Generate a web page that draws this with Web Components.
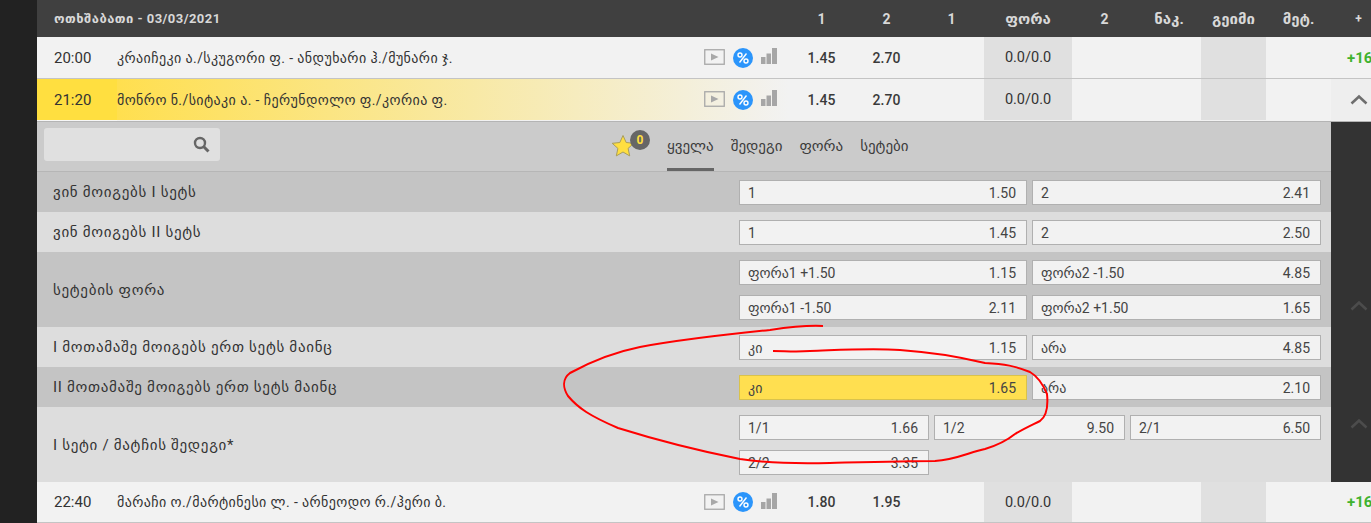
<!DOCTYPE html>
<html lang="ka">
<head>
<meta charset="utf-8">
<title>Odds</title>
<style>
html, body { margin: 0; padding: 0; height: 523px; overflow: hidden; }
body {
    position: relative;
    background: #222;
    color: #333;
    font-family: Roboto, "DejaVu Sans", sans-serif;
    font-size: 14px;
    padding-left: 37px;
    box-sizing: border-box;
}
</style>
</head>
<body>
<day-header date="ოთხშაბათი - 03/03/2021"></day-header>

<match-row time="20:00" name="კრაიჩეკი ა./სკუგორი ფ. - ანდუხარი ჰ./მუნარი ჯ." one="1.45" two="2.70" more="+16"></match-row>
<match-row time="21:20" name="მონრო ნ./სიტაკი ა. - ჩერუნდოლო ფ./კორია ფ." one="1.45" two="2.70" active></match-row>

<market-panel>
    <market-row label="ვინ მოიგებს I სეტს">
        <odd-button label="1" value="1.50"></odd-button>
        <odd-button label="2" value="2.41"></odd-button>
    </market-row>
    <market-row label="ვინ მოიგებს II სეტს" light>
        <odd-button label="1" value="1.45"></odd-button>
        <odd-button label="2" value="2.50"></odd-button>
    </market-row>
    <market-row label="სეტების ფორა">
        <odd-button label="ფორა1 +1.50" value="1.15"></odd-button>
        <odd-button label="ფორა2 -1.50" value="4.85"></odd-button>
        <odd-button label="ფორა1 -1.50" value="2.11"></odd-button>
        <odd-button label="ფორა2 +1.50" value="1.65"></odd-button>
    </market-row>
    <market-row label="I მოთამაშე მოიგებს ერთ სეტს მაინც" light>
        <odd-button label="კი" value="1.15"></odd-button>
        <odd-button label="არა" value="4.85"></odd-button>
    </market-row>
    <market-row label="II მოთამაშე მოიგებს ერთ სეტს მაინც">
        <odd-button label="კი" value="1.65" selected></odd-button>
        <odd-button label="არა" value="2.10"></odd-button>
    </market-row>
    <market-row label="I სეტი / მატჩის შედეგი*" light cols="3">
        <odd-button label="1/1" value="1.66"></odd-button>
        <odd-button label="1/2" value="9.50"></odd-button>
        <odd-button label="2/1" value="6.50"></odd-button>
        <odd-button label="2/2" value="3.35"></odd-button>
    </market-row>
</market-panel>

<match-row time="22:40" name="მარაჩი ო./მარტინესი ლ. - არნეოდო რ./ჰერი ბ." one="1.80" two="1.95" more="+16" last></match-row>

<pen-scribble></pen-scribble>

<script>
const columns = "80px 1fr 65px 65px 65px 88px 65px 64px 65px 65px 40px";

const chevron = (color) => `<svg width="18" height="11" viewBox="0 0 18 11"><path d="M1.5 9.5 9 2.5l7.5 7" fill="none" stroke="${color}" stroke-width="2.6"/></svg>`;

class DayHeader extends HTMLElement{
    constructor(){
        super();
        this.attachShadow({mode:"open"});
        const labels = ["1","2","1","ფორა","2","ნაკ.","გეიმი","მეტ."];
        this.shadowRoot.innerHTML = `
        <style>
        :host{
            display: grid;
            grid-template-columns: 752px 65px 65px 65px 88px 65px 64px 65px 65px 40px;
            height: 37px;
            align-items: center;
            background: #404040;
            color: #d8d8d8;
            font-weight: 700;
            font-size: 14px;
        }
        div{ text-align: center; }
        .date{ text-align: left; padding-left: 17px; font-size: 13px; letter-spacing: .45px; }
        .g{ font-size: 15px; }
        .plus{ padding-left: 15px; font-size: 12px; }
        </style>
        <div class="date">${this.getAttribute("date")}</div>
        ${labels.map(l => `<div class="${/\d/.test(l) ? "" : "g"}">${l}</div>`).join("")}
        <div class="plus">+</div>`;
    }
}

class MatchRow extends HTMLElement{
    constructor(){
        super();
        this.attachShadow({mode:"open"});
    }

    connectedCallback(){
        const active = this.hasAttribute("active");
        const more = this.getAttribute("more") || "";
        this.shadowRoot.innerHTML = `
        <style>
        :host{
            display: block;
            background: #f2f2f2;
            border-bottom: 1px solid ${active ? "#b4b4b4" : "#c4c4c4"};
            padding-bottom: ${active ? 1 : 0}px;
            color: #333;
        }
        .row{
            display: grid;
            grid-template-columns: ${columns};
            height: ${this.hasAttribute("last") ? 40 : 41}px;
            align-items: stretch;
            font-size: 14.500px;
        }
        .row > div{ display: flex; align-items: center; justify-content: center; }
        .row > .time{ justify-content: flex-start; padding-left: 17px; font-size: 15px; }
        .row > .name{ justify-content: space-between; font-size: 14px; letter-spacing: .4px; color: #333; white-space: nowrap; padding-right: 12px; }
        .row > .num{ font-weight: 500; font-size: 14px; color: #3a3a3a; }
        .row > .grey{ background: #e0e0e0; }
        .row > .more{ justify-content: flex-start; padding-left: 16px; overflow: hidden; color: #3fb22f; font-weight: 700; font-size: 15px; }
        .row > .toggle{ background: #eee; padding-left: 16px; }
        :host([active]) .time{ background: #ffdf40; box-shadow: 0 1px 0 #f7f7f7; }
        :host([active]) .name{ background: linear-gradient(to right, #ffdf4f, #f2f2f2); }
        .icons{ display: flex; align-items: center; gap: 8px; letter-spacing: 0; }
        svg{ display: block; }
        .video{ margin-top: -1px; }
        .bars{ margin-top: -3px; }
        </style>
        <div class="row">
            <div class="time">${this.getAttribute("time")}</div>
            <div class="name">
                <span>${this.getAttribute("name")}</span>
                <span class="icons">
                    <svg class="video" width="21" height="16" viewBox="0 0 21 16"><rect x=".75" y=".75" width="19.5" height="14.5" fill="none" stroke="#a8a8a8" stroke-width="1.3"/><path d="M7 4.500 14.500 8 7 11.500z" fill="#a8a8a8"/></svg>
                    <svg width="20" height="20" viewBox="0 0 20 20"><circle cx="10" cy="10" r="10" fill="#2b95fb"/><circle cx="7" cy="7" r="2" fill="none" stroke="#fff" stroke-width="1.400"/><circle cx="13" cy="13" r="2" fill="none" stroke="#fff" stroke-width="1.400"/><path d="M13.500 5.500 6.500 14.500" stroke="#fff" stroke-width="1.400"/></svg>
                    <svg class="bars" width="16" height="16" viewBox="0 0 16 16"><path d="M0 9h4.500v7H0zM5.500 5.500H10V16H5.500zM11 0h5v16h-5z" fill="#a6a6a6"/></svg>
                </span>
            </div>
            <div class="num">${this.getAttribute("one")}</div>
            <div class="num">${this.getAttribute("two")}</div>
            <div></div>
            <div class="grey">0.0/0.0</div>
            <div></div>
            <div></div>
            <div class="grey"></div>
            <div></div>
            ${active ? `<div class="toggle">${chevron("#6e6e6e")}</div>` : `<div class="more">${more}</div>`}
        </div>`;
    }
}

class MarketPanel extends HTMLElement{
    constructor(){
        super();
        this.attachShadow({mode:"open"});
        this.shadowRoot.innerHTML = `
        <style>
        :host{
            display: flex;
            background: #333;
        }
        .main{ flex: 1; background: #cbcbcb; }
        .rail{
            width: 40px;
            display: flex;
            flex-direction: column;
            align-items: flex-start;
            gap: 107px;
            padding: 178px 0 0 19px;
            box-sizing: border-box;
        }
        svg{ display: block; }
        </style>
        <div class="main">
            <panel-toolbar></panel-toolbar>
            <slot></slot>
        </div>
        <div class="rail">${chevron("#4c4c4c")}${chevron("#4c4c4c")}</div>`;
    }
}

class PanelToolbar extends HTMLElement{
    constructor(){
        super();
        this.attachShadow({mode:"open"});
        this.shadowRoot.innerHTML = `
        <style>
        :host{
            display: flex;
            height: 49px;
            border-bottom: 1px solid #b6b6b6;
            padding-left: 7px;
        }
        .search{
            width: 176px;
            height: 33px;
            margin-top: 6px;
            background: #e0e0e0;
            border-radius: 3px;
            display: flex;
            align-items: center;
            justify-content: flex-end;
            padding-right: 10px;
            box-sizing: border-box;
        }
        .fav{
            position: relative;
            width: 23px;
            height: 24px;
            margin: 12px 33px 0 391px;
        }
        .badge{
            position: absolute;
            left: 19px;
            top: -4px;
            width: 20px;
            height: 20px;
            border-radius: 50%;
            background: #666;
            color: #ffdf40;
            font-size: 12px;
            font-weight: 700;
            text-align: center;
            line-height: 20px;
        }
        nav{ display: flex; gap: 17px; }
        a{
            font-size: 15px;
            color: #3c3c3c;
            line-height: 48px;
            height: 46px;
            border-bottom: 3px solid transparent;
        }
        a.on{ border-bottom-color: #666; }
        svg{ display: block; }
        </style>
        <div class="search">
            <svg width="17" height="17" viewBox="0 0 17 17"><circle cx="7" cy="7" r="5" fill="none" stroke="#666" stroke-width="2.400"/><path d="M10.800 10.800 15.500 15.500" stroke="#666" stroke-width="3"/></svg>
        </div>
        <div class="fav">
            <svg width="24" height="24" viewBox="0 0 24 24"><path d="M12 1.500l3.200 7 7.600.8-5.700 5.100 1.600 7.500L12 18l-6.700 3.900 1.600-7.500L1.200 9.300l7.600-.8z" fill="#ffdf40" stroke="#a89d5c" stroke-width="1"/></svg>
            <div class="badge">0</div>
        </div>
        <nav>
            <a class="on">ყველა</a>
            <a>შედეგი</a>
            <a>ფორა</a>
            <a>სეტები</a>
        </nav>`;
    }
}

class MarketRow extends HTMLElement{
    constructor(){
        super();
        this.attachShadow({mode:"open"});
    }

    connectedCallback(){
        const cols = this.getAttribute("cols") === "3" ? "190px 191px 191px" : "288px 289px";
        this.shadowRoot.innerHTML = `
        <style>
        :host{
            display: grid;
            grid-template-columns: 702px 582px;
            background: #c4c4c4;
            align-items: center;
        }
        :host([light]){ background: #ddd; }
        .label{
            padding-left: 16px;
            font-size: 15px;
            letter-spacing: .7px;
            color: #333;
            white-space: nowrap;
        }
        .odds{
            display: grid;
            grid-template-columns: ${cols};
            column-gap: 5px;
            row-gap: 10px;
            padding: 8px 0 7px;
        }
        </style>
        <div class="label">${this.getAttribute("label")}</div>
        <div class="odds"><slot></slot></div>`;
    }
}

class OddButton extends HTMLElement{
    constructor(){
        super();
        this.attachShadow({mode:"open"});
    }

    connectedCallback(){
        this.shadowRoot.innerHTML = `
        <style>
        :host{
            display: flex;
            justify-content: space-between;
            align-items: center;
            height: 25px;
            box-sizing: border-box;
            padding: 0 10px 0 8px;
            background: #f2f2f2;
            border: 1px solid #b0b0b0;
            color: #444;
            font-size: 14px;
        }
        :host([selected]){ background: #ffdf50; border-color: #d9c24c; }
        </style>
        <span>${this.getAttribute("label")}</span>
        <span>${this.getAttribute("value")}</span>`;
    }
}

class PenScribble extends HTMLElement{
    constructor(){
        super();
        this.attachShadow({mode:"open"});
        this.shadowRoot.innerHTML = `
        <style>
        :host{ position: absolute; left: 0; top: 0; width: 1371px; height: 523px; pointer-events: none; }
        svg{ display: block; }
        </style>
        <svg width="1371" height="523" viewBox="0 0 1371 523">
            <path d="M823 326 C805 325 790 327 770 330 C730 334 690 338 640 347 C615 352 590 362 570 373 C562 379 563 388 568 396 C578 408 590 416 618 428 C650 438 700 451 740 459 C765 463 790 464 830 463 C870 462 905 461 935 461 C955 460 970 452 985 449 C995 446 1005 442 1015 434 C1025 428 1032 425 1040 421 C1047 416 1048 404 1047 394 C1042 382 1037 376 1030 372 C1015 366 1005 364 985 363 C960 357 930 352 900 350 C870 348 840 350 810 351 C795 352 785 351 773 351" fill="none" stroke="#f00" stroke-width="2"/>
        </svg>`;
    }
}

customElements.define("day-header", DayHeader);
customElements.define("match-row", MatchRow);
customElements.define("market-panel", MarketPanel);
customElements.define("panel-toolbar", PanelToolbar);
customElements.define("market-row", MarketRow);
customElements.define("odd-button", OddButton);
customElements.define("pen-scribble", PenScribble);
</script>
</body>
</html>
